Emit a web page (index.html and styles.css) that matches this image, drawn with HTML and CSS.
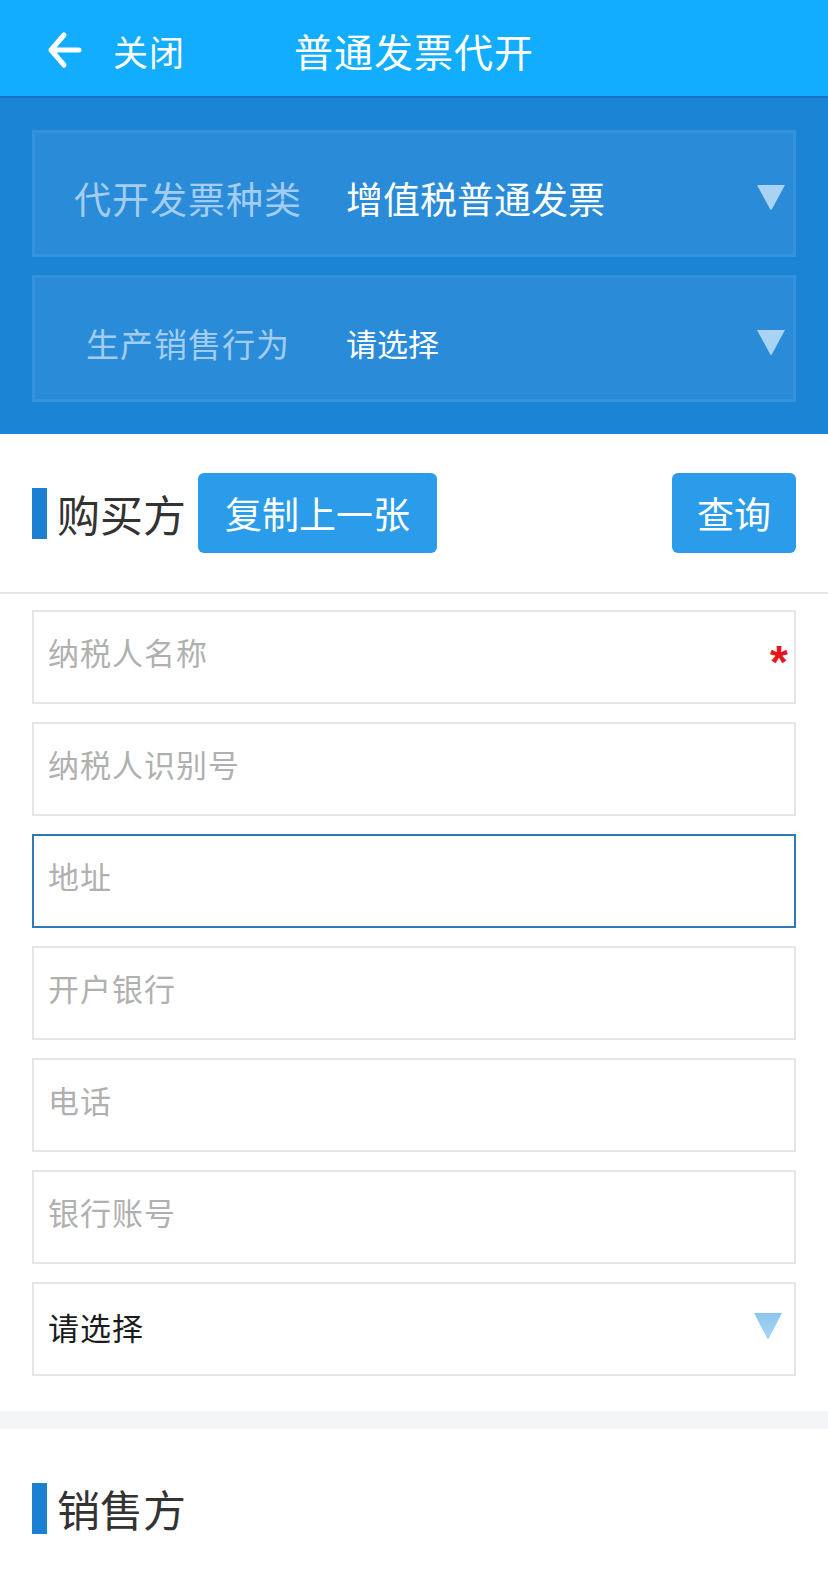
FILE: index.html
```html
<!DOCTYPE html>
<html lang="zh-CN">
<head>
  <meta charset="UTF-8">
  <title>普通发票代开</title>
  <link rel="stylesheet" href="styles.css">
</head>
<body>
  <div class="topbar">
    <div class="back">
      <svg width="36" height="38" viewBox="0 0 36 38">
        <path d="M17 4 L4 19 L17 34 M4 19 H32" fill="none" stroke="#fff" stroke-width="5" stroke-linecap="round" stroke-linejoin="round"/>
      </svg>
      <span>关闭</span>
    </div>
    <div class="title">普通发票代开</div>
  </div>

  <div class="panel">
    <div class="pick">
      <div class="pick-label big">代开发票种类</div>
      <div class="pick-value big">增值税普通发票</div>
      <svg class="tri" width="30" height="27" viewBox="0 0 30 27">
        <path d="M1 1 H29 L16 25 Q15 27 14 25 Z" fill="#a9d3f3"/>
      </svg>
    </div>
    <div class="pick">
      <div class="pick-label">生产销售行为</div>
      <div class="pick-value">请选择</div>
      <svg class="tri" width="30" height="27" viewBox="0 0 30 27">
        <path d="M1 1 H29 L16 25 Q15 27 14 25 Z" fill="#a9d3f3"/>
      </svg>
    </div>
  </div>

  <div class="section-head line">
    <div class="head-title">购买方</div>
    <button class="btn copy">复制上一张</button>
    <button class="btn query">查询</button>
  </div>

  <div class="form">
    <div class="field">
      <input type="text" placeholder="纳税人名称">
      <span class="star">*</span>
    </div>
    <div class="field"><input type="text" placeholder="纳税人识别号"></div>
    <div class="field"><input type="text" class="focused" placeholder="地址"></div>
    <div class="field"><input type="text" placeholder="开户银行"></div>
    <div class="field"><input type="text" placeholder="电话"></div>
    <div class="field"><input type="text" placeholder="银行账号"></div>
    <div class="field select">
      <span>请选择</span>
      <svg width="30" height="28" viewBox="0 0 30 28">
        <defs>
          <linearGradient id="g" x1="0" y1="0" x2="0" y2="1">
            <stop offset="0" stop-color="#8cc6ee"/>
            <stop offset="1" stop-color="#a8d4f3"/>
          </linearGradient>
        </defs>
        <path d="M1 1 H29 L16 26 Q15 28 14 26 Z" fill="url(#g)"/>
      </svg>
    </div>
  </div>

  <div class="gap-bar"></div>

  <div class="section-head">
    <div class="head-title">销售方</div>
  </div>
</body>
</html>
```

FILE: styles.css
```css
body {
  margin: 0;
  padding: 0;
  font-family: "Noto Sans CJK SC", "Noto Sans", sans-serif;
  background: #fff;
}
.topbar {
  display: flex;
  align-items: center;
  height: 98px;
  box-sizing: border-box;
  padding-top: 4px;
  background: #12adfe;
  border-bottom: 2px solid #1574c6;
  color: #fff;
}
.back {
  display: flex;
  align-items: center;
  margin-left: 47px;
  width: 247px;
}
.back svg {
  display: block;
}
.back span {
  margin-left: 30px;
  font-size: 35px;
  letter-spacing: 1px;
}
.title {
  font-size: 39px;
  letter-spacing: 1px;
}
.panel {
  background: #1c84d4;
  padding: 32px 32px 32px;
  display: flex;
  flex-direction: column;
  gap: 18px;
}
.pick {
  display: flex;
  align-items: center;
  height: 127px;
  box-sizing: border-box;
  padding-top: 8px;
  background: #2a8bd8;
  border: 3px solid #3592dc;
}
.pick-label {
  flex: 0 0 306px;
  text-align: center;
  color: #a2cdf1;
  font-size: 33px;
  letter-spacing: 1px;
}
.pick-value {
  flex: 1;
  padding-left: 5px;
  color: #fff;
  font-size: 31px;
}
.pick-label.big {
  font-size: 37px;
}
.pick-value.big {
  font-size: 37px;
}
.tri {
  margin-right: 7px;
  display: block;
}
.section-head {
  display: flex;
  align-items: center;
  height: 158px;
  padding: 0 32px;
}
.section-head.line {
  border-bottom: 2px solid #e6e6e6;
}
.head-title {
  border-left: 15px solid #1b7fd2;
  height: 51px;
  display: flex;
  align-items: center;
  padding-left: 10px;
  font-size: 43px;
  color: #333;
}
.btn {
  height: 80px;
  border: none;
  border-radius: 6px;
  background: #2b9cea;
  color: #fff;
  font-family: "Noto Sans CJK SC", sans-serif;
  font-size: 37px;
  cursor: pointer;
}
.copy {
  margin-left: 12px;
  padding: 0 27px;
}
.query {
  margin-left: auto;
  padding: 0 25px;
}
.form {
  display: flex;
  flex-direction: column;
  gap: 18px;
  padding: 16px 32px 35px;
}
.field {
  position: relative;
  height: 94px;
}
.field input {
  width: 100%;
  height: 100%;
  box-sizing: border-box;
  border: 2px solid #e6e6e6;
  outline: none;
  padding: 0 0 12px 14px;
  font-family: "Noto Sans CJK SC", sans-serif;
  font-size: 31px;
  letter-spacing: 1px;
  color: #222;
}
.field input::placeholder {
  color: #b0b0b0;
}
.field input.focused {
  border-color: #2e79b6;
}
.star {
  position: absolute;
  right: 8px;
  top: 29px;
  color: #e8161b;
  font-family: "Liberation Sans", sans-serif;
  font-weight: bold;
  font-size: 46px;
  line-height: 46px;
}
.field.select {
  display: flex;
  align-items: center;
  justify-content: space-between;
  box-sizing: border-box;
  border: 2px solid #e6e6e6;
  padding: 0 11px 6px 14px;
}
.field.select span {
  font-size: 31px;
  color: #1c1c1c;
  letter-spacing: 1px;
}
.gap-bar {
  height: 18px;
  background: #f4f5f8;
}
```
